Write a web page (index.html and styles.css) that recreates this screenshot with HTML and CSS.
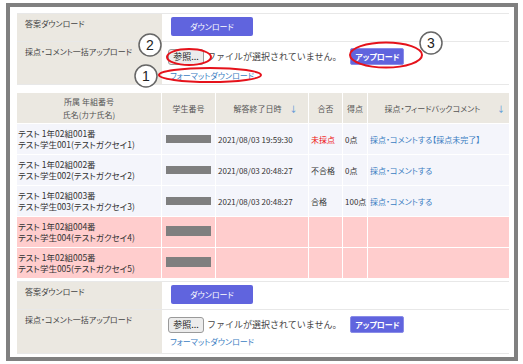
FILE: index.html
```html
<!DOCTYPE html>
<html lang="ja">
<head>
<meta charset="utf-8">
<link rel="stylesheet" href="styles.css">
</head>
<body>
<div class="frame">
  <div class="form">
    <div class="frow r1">
      <div class="lab">答案ダウンロード</div>
      <div class="val"><span class="btn dl">ダウンロード</span></div>
    </div>
    <div class="frow r2">
      <div class="lab">採点・コメント一括アップロード</div>
      <div class="val">
        <div class="upl"><span class="browse">参照...</span><span class="nofile">ファイルが選択されていません。</span><span class="btn up">アップロード</span></div>
        <a class="link fmt">フォーマットダウンロード</a>
      </div>
    </div>
  </div>

  <div class="tbl">
    <div class="h two">所属 年組番号<br>氏名(カナ氏名)</div>
    <div class="h">学生番号</div>
    <div class="h sort3"><span>解答終了日時</span><span class="arr">↓</span></div>
    <div class="h">合否</div>
    <div class="h">得点</div>
    <div class="h sort"><span class="ht">採点・フィードバックコメント</span><span class="arr">↓</span></div>

    <div class="row">
      <div class="c name">テスト 1年02組001番<br>テスト学生001(テストガクセイ1)</div>
      <div class="c"><span class="redact"></span></div>
      <div class="c">2021/08/03 19:59:30</div>
      <div class="c red">未採点</div>
      <div class="c">0点</div>
      <div class="c"><a class="link">採点・コメントする【採点未完了】</a></div>
    </div>
    <div class="row">
      <div class="c name">テスト 1年02組002番<br>テスト学生002(テストガクセイ2)</div>
      <div class="c"><span class="redact"></span></div>
      <div class="c">2021/08/03 20:48:27</div>
      <div class="c">不合格</div>
      <div class="c">0点</div>
      <div class="c"><a class="link">採点・コメントする</a></div>
    </div>
    <div class="row">
      <div class="c name">テスト 1年02組003番<br>テスト学生003(テストガクセイ3)</div>
      <div class="c"><span class="redact"></span></div>
      <div class="c">2021/08/03 20:48:27</div>
      <div class="c">合格</div>
      <div class="c">100点</div>
      <div class="c"><a class="link">採点・コメントする</a></div>
    </div>
    <div class="row pink">
      <div class="c name">テスト 1年02組004番<br>テスト学生004(テストガクセイ4)</div>
      <div class="c"><span class="redact big"></span></div>
      <div class="c"></div>
      <div class="c"></div>
      <div class="c"></div>
      <div class="c"></div>
    </div>
    <div class="row pink">
      <div class="c name">テスト 1年02組005番<br>テスト学生005(テストガクセイ5)</div>
      <div class="c"><span class="redact big"></span></div>
      <div class="c"></div>
      <div class="c"></div>
      <div class="c"></div>
      <div class="c"></div>
    </div>
  </div>

  <div class="form bottom">
    <div class="frow r1">
      <div class="lab">答案ダウンロード</div>
      <div class="val"><span class="btn dl">ダウンロード</span></div>
    </div>
    <div class="frow r2">
      <div class="lab">採点・コメント一括アップロード</div>
      <div class="val">
        <div class="upl"><span class="browse">参照...</span><span class="nofile">ファイルが選択されていません。</span><span class="btn up">アップロード</span></div>
        <a class="link fmt">フォーマットダウンロード</a>
      </div>
    </div>
  </div>
</div>

<svg class="annot" width="523" height="364" viewBox="0 0 523 364">
  <g fill="none" stroke="#e5121b" stroke-width="2">
    <ellipse cx="189" cy="57" rx="22" ry="8"/>
    <ellipse cx="210" cy="75" rx="51" ry="7"/>
    <ellipse cx="386" cy="55" rx="36" ry="12.5"/>
  </g>
  <g fill="#fff" stroke="#666" stroke-width="1.5">
    <circle cx="150" cy="45" r="11"/>
    <circle cx="146" cy="76" r="11"/>
    <circle cx="431" cy="43" r="11"/>
  </g>
  <g class="num" fill="#222" text-anchor="middle">
    <text x="150" y="50">2</text>
    <text x="146" y="81">1</text>
    <text x="431" y="48">3</text>
  </g>
</svg>
</body>
</html>
```

FILE: styles.css
```css
html, body {
  margin: 0;
  padding: 0;
  background: #fff;
}
body {
  position: relative;
  width: 523px;
  height: 364px;
  overflow: hidden;
  font-family: "Noto Sans CJK JP", "Noto Sans", sans-serif;
  font-size: 8px;
  color: #333;
  font-feature-settings: "palt";
}
.frame {
  box-sizing: border-box;
  margin: 3px 0 0 6px;
  width: 512px;
  height: 358px;
  border: 4px solid #808080;
  padding: 6px 5px 0 7px;
}
.form {
  border-bottom: 1px solid #e8e8e8;
}
.frow {
  display: grid;
  grid-template-columns: 145px 1fr;
  border-top: 1px solid #e8e8e8;
}
.r1 { height: 27px; }
.r2 { height: 42px; }
.bottom .r2 { height: 43px; }
.lab {
  background: #ebe8e1;
  color: #444;
  padding: 4px 8px 0 8px;
  line-height: 11px;
}
.val {
  padding: 3px 0 0 9px;
  display: flex;
  flex-direction: column;
  align-items: flex-start;
}
.r2 .val { padding: 5px 0 0 6px; }
.btn {
  display: inline-flex;
  align-items: center;
  justify-content: center;
  background: #6064de;
  color: #fff;
  border-radius: 2px;
}
.dl {
  width: 82px;
  height: 19px;
}
.up {
  width: 54px;
  height: 17px;
  margin-left: 9px;
  font-weight: 700;
  border: 1px solid #8a8ce8;
  box-sizing: border-box;
}
.upl {
  display: flex;
  align-items: center;
  height: 19px;
}
.browse {
  display: inline-flex;
  align-items: center;
  justify-content: center;
  box-sizing: border-box;
  width: 36px;
  height: 16px;
  border: 1px solid #9a9a9a;
  border-radius: 3px;
  background: #ececec;
  color: #222;
  font-size: 9px;
  font-feature-settings: normal;
}
.nofile {
  margin-left: 3px;
  font-size: 9px;
  color: #444;
  font-feature-settings: normal;
}
.link {
  color: #3a7dc2;
  text-decoration: none;
}
.fmt {
  margin-top: 4px;
  margin-left: 2px;
  line-height: 11px;
}
.bottom .fmt { margin-top: 2px; }

.tbl {
  margin-top: 8px;
  display: grid;
  grid-template-columns: 144px 53px 92px 33px 24px 141px;
  grid-template-rows: 30px;
  grid-auto-rows: 30px;
  gap: 1px;
  background: #fff;
}
.h {
  background: #ebe8e1;
  color: #555;
  display: flex;
  align-items: center;
  justify-content: center;
  text-align: center;
  line-height: 13px;
}
.h.sort {
  justify-content: flex-start;
  padding-right: 4px;
}
.h.sort3 {
  padding-left: 7px;
}
.sort3 .arr {
  margin-left: 8px;
}
.ht {
  flex: 1;
  text-align: center;
}
.arr {
  color: #4a8fd6;
  font-size: 8px;
  font-feature-settings: normal;
}
.row { display: contents; }
.c {
  background: #f4f5fb;
  display: flex;
  align-items: center;
  padding-left: 2px;
  line-height: 11px;
  white-space: nowrap;
}
.c.name {
  padding-left: 1px;
  font-size: 8.5px;
}
.pink .c { background: #ffcdcd; }
.red { color: #ee1111; }
.redact {
  display: inline-block;
  width: 45px;
  height: 8px;
  margin-left: 2px;
  background: #7f7f7f;
}
.redact.big {
  height: 10px;
  margin-top: -3px;
}
.bottom { margin-top: 3px; }

.annot {
  position: absolute;
  top: 0;
  left: 0;
  pointer-events: none;
}
.num text {
  font-family: "Liberation Sans", "DejaVu Sans", sans-serif;
  font-size: 14px;
}
```
